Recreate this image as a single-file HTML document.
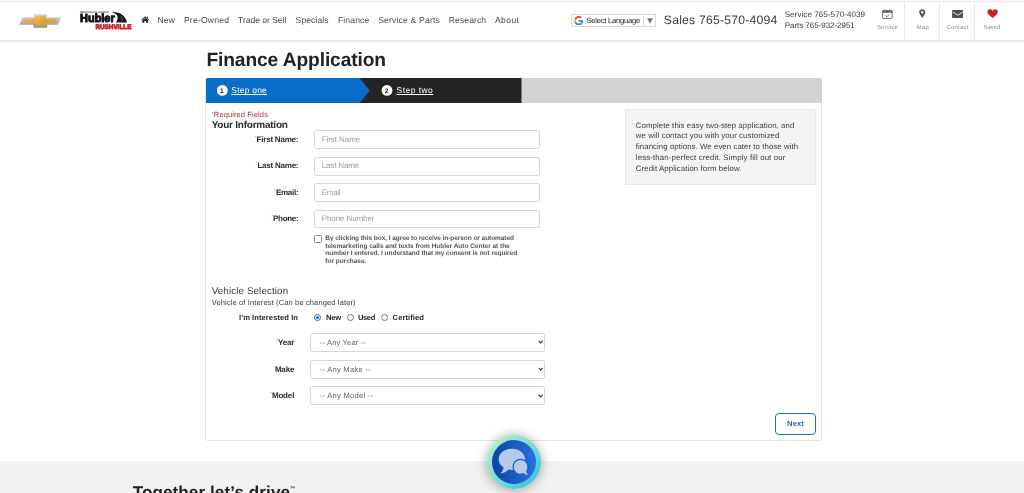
<!DOCTYPE html>
<html lang="en"><head><meta charset="utf-8"><title>Finance Application | Hubler Chevrolet Rushville</title>
<style>
*{box-sizing:border-box}
html,body{margin:0;padding:0;background:#fff}
body{font-family:"Liberation Sans",Arial,sans-serif;overflow:hidden;text-rendering:geometricPrecision}
#page{position:relative;width:1024px;height:493px;overflow:hidden;background:transparent;will-change:transform}
.t{position:absolute;white-space:nowrap;line-height:1;display:block}
.abs{position:absolute}
.ast{font-size:.6em;vertical-align:.55em;letter-spacing:0}
.ast.r{color:#9a9a9a;font-weight:400}
#hdr{position:absolute;left:0;top:0;width:1024px;height:40px;background:#fff;box-shadow:0 1px 3px rgba(0,0,0,.16)}
#topline{position:absolute;left:0;top:0;width:1024px;height:2px;background:linear-gradient(#fef9f7 0,#fef9f7 50%,#f8e9eb 50%,#f8e9eb 100%)}
.vdiv{position:absolute;top:2px;width:1px;height:38px;background:#e9e9e9}
#footer{position:absolute;left:0;top:460.8px;width:1024px;height:40px;background:#f2f2f2}
#panel{position:absolute;left:205px;top:78px;width:617px;height:363px;border:1px solid #e3e3e3;border-radius:2.5px;background:#fff}
#steps{position:absolute;left:205.5px;top:78.2px;width:616.5px;height:24.9px;background:#d3d3d3;border-radius:2.5px 2.5px 0 0;overflow:hidden}
.inp{position:absolute;left:314px;width:226px;height:19px;border:1px solid #d6d6d6;border-radius:2.3px;background:#fff}
.sel{position:absolute;left:310px;width:234.5px;height:19px;border:1px solid #d6d6d6;border-radius:2.3px;background:#fff}
.radio{position:absolute;width:7.2px;height:7.2px;border-radius:50%;border:.8px solid #767676;background:#fff}
#info{position:absolute;left:625.1px;top:109.1px;width:190.5px;height:75.6px;background:#f4f4f4;border:1px solid #e7e7e7;border-radius:1px}
#next{position:absolute;left:774.8px;top:413px;width:41.2px;height:21.6px;border:1.1px solid #1a6fc9;border-radius:4px;background:#fff}
#cb{position:absolute;left:314.2px;top:235.2px;width:7.6px;height:7.6px;border:.7px solid #8a8a8a;border-radius:1.5px;background:#fff}
#gt{position:absolute;left:571px;top:14px;width:85px;height:13px;border:1px solid #dadada;background:#fff}

</style></head><body>
<div id="page">
<div id="footer"></div>
<div id="hdr"></div>
<div id="topline"></div>
<div class="vdiv" style="left:904px"></div>
<div class="vdiv" style="left:939.2px"></div>
<div class="vdiv" style="left:974px"></div>
<div id="gt"></div>
<div id="panel"></div>
<div id="steps">
<svg class="abs" style="left:0;top:0" width="617" height="25" viewBox="0 0 617 25">
<rect x="0" y="0" width="315.5" height="25" fill="#242424"/>
<polygon points="0,0 153.5,0 163.8,12.4 153.5,25 0,25" fill="#0a6cc9"/>
<circle cx="16.3" cy="12.4" r="5.4" fill="#fff"/>
<circle cx="181" cy="12.4" r="5.4" fill="#fff"/>
</svg>
</div>
<div class="inp" style="top:130px"></div>
<div class="inp" style="top:157px"></div>
<div class="inp" style="top:183px"></div>
<div class="inp" style="top:210px;height:18px"></div>
<div id="cb"></div>
<div class="radio" style="left:314.1px;top:313.8px;border-color:#1a6fe0"></div>
<div class="abs" style="left:316px;top:315.7px;width:3.4px;height:3.4px;border-radius:50%;background:#1a6fe0"></div>
<div class="radio" style="left:346.8px;top:313.8px"></div>
<div class="radio" style="left:381.3px;top:313.8px"></div>
<div class="sel" style="top:333px"></div>
<div class="sel" style="top:360px"></div>
<div class="sel" style="top:386px"></div>
<div id="info"></div>
<div id="next"></div>
<!-- chevy bowtie -->
<svg class="abs" style="left:17.5px;top:13px" width="45" height="16" viewBox="0 0 45 16">
<defs><linearGradient id="gold" x1="0" y1="0" x2="0" y2="1"><stop offset="0" stop-color="#eec361"/><stop offset=".5" stop-color="#e3ae41"/><stop offset="1" stop-color="#dca233"/></linearGradient>
<linearGradient id="silv" x1="0" y1="0" x2="0" y2="1"><stop offset="0" stop-color="#dedede"/><stop offset=".5" stop-color="#bcbcbc"/><stop offset="1" stop-color="#8c8c8c"/></linearGradient></defs>
<polygon points="4.6,4.2 15.5,4.2 15.5,1 29.2,1 29.2,4.2 43.3,4.2 39.9,11.7 29.2,11.7 29.2,14.7 15.5,14.7 15.5,11.7 1.3,11.7" fill="url(#silv)"/>
<polygon points="7.6,5.7 16.9,5.7 16.9,2.7 27.9,2.7 27.9,5.7 38.5,5.7 36.9,10 27.9,10 27.9,13 16.9,13 16.9,10 5.7,10" fill="url(#gold)"/>
<polygon points="22.4,2.7 27.9,2.7 27.9,5.7 38.5,5.7 36.9,10 27.9,10 27.9,13 22.4,13" fill="#c98a1c" opacity=".28"/>
</svg>
<!-- Hubler logo -->
<svg class="abs" style="left:78px;top:9px" width="56" height="22" viewBox="0 0 56 22">
<text x="1.7" y="3.5" font-family="Liberation Sans, Arial, sans-serif" font-size="2.6" font-weight="700" font-style="italic" fill="#333" textLength="29" lengthAdjust="spacingAndGlyphs">INDIANA'S GIANT</text>
<text x="2.1" y="13.4" font-family="Liberation Sans, Arial, sans-serif" font-size="11.7" font-weight="700" fill="#111" stroke="#111" stroke-width="1" stroke-linejoin="round" textLength="34.6" lengthAdjust="spacingAndGlyphs">Hubler</text>
<path d="M33.9,3.1 C38,2.9 42,3.8 45,6.4 C47.2,8.3 48.4,10.6 49,13.4 L38,13.4 C40.2,10.4 40.4,7.4 38.2,5.6 C36.8,4.5 35.4,3.7 33.9,3.1 Z" fill="#161616"/>
<path d="M43.4,7.6 L44.3,12" stroke="#fff" stroke-width=".7" stroke-dasharray="1.1 .8" fill="none" opacity=".8"/>
<text x="17.4" y="20.1" font-family="Liberation Sans, Arial, sans-serif" font-size="6.6" font-weight="700" fill="#d01f2e" stroke="#d01f2e" stroke-width=".8" stroke-linejoin="round" textLength="36" lengthAdjust="spacingAndGlyphs">RUSHVILLE</text>
</svg>
<!-- home icon -->
<svg class="abs" style="left:140.5px;top:16.1px" width="8.4" height="7" viewBox="0 0 24 20">
<path d="M12 1 L0.5 10.5 L2 12.3 L12 4 L22 12.3 L23.5 10.5 L19.5 7.2 V2.2 H16.6 V4.8 Z" fill="#222"/>
<path d="M12 5.6 L3.6 12.5 V19.5 H9.6 V14 H14.4 V19.5 H20.4 V12.5 Z" fill="#222"/>
</svg>
<!-- google G -->
<svg class="abs" style="left:573.5px;top:15.6px" width="9.4" height="9.4" viewBox="0 0 48 48">
<path fill="#EA4335" d="M24 9.5c3.54 0 6.71 1.22 9.21 3.6l6.85-6.85C35.9 2.38 30.47 0 24 0 14.62 0 6.51 5.38 2.56 13.22l7.98 6.19C12.43 13.72 17.74 9.5 24 9.5z"/>
<path fill="#4285F4" d="M46.98 24.55c0-1.57-.15-3.09-.38-4.55H24v9.02h12.94c-.58 2.96-2.26 5.48-4.78 7.18l7.73 6c4.51-4.18 7.09-10.36 7.09-17.65z"/>
<path fill="#FBBC05" d="M10.53 28.59c-.48-1.45-.76-2.99-.76-4.59s.27-3.14.76-4.59l-7.98-6.19C.92 16.46 0 20.12 0 24c0 3.88.92 7.54 2.56 10.78l7.97-6.19z"/>
<path fill="#34A853" d="M24 48c6.48 0 11.93-2.13 15.89-5.81l-7.73-6c-2.15 1.45-4.92 2.3-8.16 2.3-6.26 0-11.57-4.22-13.47-9.91l-7.98 6.19C6.51 42.62 14.62 48 24 48z"/>
</svg>
<div class="abs" style="left:643.3px;top:16px;width:1px;height:9.5px;background:#d5d5d5"></div>
<svg class="abs" style="left:646.8px;top:17.6px" width="6" height="6" viewBox="0 0 6 6"><polygon points="0.2,0.3 5.8,0.3 3,5.7" fill="#767676"/></svg>
<!-- calendar -->
<svg class="abs" style="left:882.4px;top:9px" width="10.8" height="10" viewBox="0 0 21.6 20">
<rect x="1.2" y="3.2" width="19.2" height="15.6" rx="1.2" fill="none" stroke="#505050" stroke-width="1.6"/>
<rect x="1.2" y="3.2" width="19.2" height="4.2" fill="#505050"/>
<rect x="5" y="0.4" width="2.6" height="5" rx="1.2" fill="#505050" stroke="#fff" stroke-width=".7"/>
<rect x="14" y="0.4" width="2.6" height="5" rx="1.2" fill="#505050" stroke="#fff" stroke-width=".7"/>
<path d="M6.8 12.6 L9.8 15.4 L15 10.2" fill="none" stroke="#505050" stroke-width="1.6"/>
</svg>
<!-- pin -->
<svg class="abs" style="left:919.3px;top:9.4px" width="6.6" height="9.2" viewBox="0 0 13.2 18.4">
<path d="M6.6 0.3 C3 0.3 0.4 3 0.4 6.4 C0.4 10 4.4 13.6 6.6 18 C8.8 13.6 12.8 10 12.8 6.4 C12.8 3 10.2 0.3 6.6 0.3 Z M6.6 3.8 A2.6 2.6 0 1 1 6.6 9 A2.6 2.6 0 1 1 6.6 3.8 Z" fill="#505050" fill-rule="evenodd"/>
</svg>
<!-- envelope -->
<svg class="abs" style="left:951.8px;top:10.1px" width="11.6" height="8.2" viewBox="0 0 23.2 16.4">
<rect x="0.2" y="0.2" width="22.8" height="16" rx="1.4" fill="#505050"/>
<path d="M1.6 4.2 L11.6 10.4 L21.6 4.2" fill="none" stroke="#fff" stroke-width="1.7"/>
</svg>
<!-- heart -->
<svg class="abs" style="left:986.6px;top:9.3px" width="11.2" height="9.2" viewBox="0 0 24 20">
<path d="M12 19.6 C5 14 0.6 10.4 0.6 5.8 C0.6 2.6 3.2 0.4 6.2 0.4 C8.6 0.4 10.8 1.8 12 4 C13.2 1.8 15.4 0.4 17.8 0.4 C20.8 0.4 23.4 2.6 23.4 5.8 C23.4 10.4 19 14 12 19.6 Z" fill="#cb1e22"/>
</svg>
<!-- select arrows -->
<svg class="abs" style="left:537.6px;top:340.4px" width="5.4" height="4" viewBox="0 0 5.4 4"><path d="M0.7 0.9 L2.7 2.9 L4.7 0.9" fill="none" stroke="#333" stroke-width="1.1"/></svg>
<svg class="abs" style="left:537.6px;top:367.1px" width="5.4" height="4" viewBox="0 0 5.4 4"><path d="M0.7 0.9 L2.7 2.9 L4.7 0.9" fill="none" stroke="#333" stroke-width="1.1"/></svg>
<svg class="abs" style="left:537.6px;top:393.7px" width="5.4" height="4" viewBox="0 0 5.4 4"><path d="M0.7 0.9 L2.7 2.9 L4.7 0.9" fill="none" stroke="#333" stroke-width="1.1"/></svg>
<!-- chat -->
<div class="abs" id="chat" style="left:486.5px;top:434.5px;width:54.4px;height:54.4px;border-radius:50%;background:linear-gradient(135deg,#b4ecd0 10%,#6cd8d4 60%,#35c4dc 90%);box-shadow:0 1px 11px 1px rgba(0,0,0,.3)"></div>
<div class="abs" style="left:491.8px;top:439.8px;width:43.8px;height:43.8px;border-radius:50%;background:linear-gradient(90deg,#0944a4,#2a70e2)"></div>
<svg class="abs" style="left:491.8px;top:439.8px" width="43.8" height="43.8" viewBox="0 0 43.8 43.8">
<path d="M19.9 8.7 C12.6 8.7 6.7 13.4 6.7 19.3 C6.7 22.6 8.6 25.6 11.6 27.5 C11.3 29.7 10 31.9 8.4 33.4 C11.6 33.2 14.6 32 16.4 29.6 C17.5 29.8 18.7 29.9 19.9 29.9 C27.2 29.9 33.1 25.2 33.1 19.3 C33.1 13.4 27.2 8.7 19.9 8.7 Z" fill="#b5c9ed"/>
<circle cx="28.6" cy="26.9" r="8.1" fill="#1659c4"/>
<path d="M28.6 20.1 C24.8 20.1 21.8 23.1 21.8 26.9 C21.8 30.7 24.8 33.7 28.6 33.7 C29.6 33.7 30.5 33.5 31.4 33.1 C32.6 34.3 34.4 35 36 35.1 C35 34 34.4 32.7 34.2 31.2 C35 30 35.4 28.5 35.4 26.9 C35.4 23.1 32.4 20.1 28.6 20.1 Z" fill="#b5c9ed"/>
</svg>

<span class="t" id="t0" style="left:157.4px;top:16.00px;font-size:8.6px;font-weight:400;color:#4a4a4a;letter-spacing:0.148px;">New</span>
<span class="t" id="t1" style="left:183.9px;top:16.00px;font-size:8.6px;font-weight:400;color:#4a4a4a;letter-spacing:0.204px;">Pre-Owned</span>
<span class="t" id="t2" style="left:238.0px;top:16.00px;font-size:8.6px;font-weight:400;color:#4a4a4a;letter-spacing:-0.049px;">Trade or Sell</span>
<span class="t" id="t3" style="left:295.6px;top:16.00px;font-size:8.6px;font-weight:400;color:#4a4a4a;letter-spacing:0.074px;">Specials</span>
<span class="t" id="t4" style="left:338.0px;top:16.00px;font-size:8.6px;font-weight:400;color:#4a4a4a;letter-spacing:0.104px;">Finance</span>
<span class="t" id="t5" style="left:378.2px;top:16.00px;font-size:8.6px;font-weight:400;color:#4a4a4a;letter-spacing:0.169px;">Service &amp; Parts</span>
<span class="t" id="t6" style="left:448.8px;top:16.00px;font-size:8.6px;font-weight:400;color:#4a4a4a;letter-spacing:0.074px;">Research</span>
<span class="t" id="t7" style="left:495.0px;top:16.00px;font-size:8.6px;font-weight:400;color:#4a4a4a;letter-spacing:0.383px;">About</span>
<span class="t" id="t8" style="left:586.5px;top:17.00px;font-size:7.6px;font-weight:400;color:#222;letter-spacing:-0.237px;">Select Language</span>
<span class="t" id="t9" style="left:663.8px;top:14.00px;font-size:12.2px;font-weight:400;color:#3a3a3a;letter-spacing:0.225px;">Sales 765-570-4094</span>
<span class="t" id="t10" style="left:784.7px;top:11.00px;font-size:8px;font-weight:400;color:#3a3a3a;letter-spacing:0.083px;">Service 765-570-4039</span>
<span class="t" id="t11" style="left:784.7px;top:22.00px;font-size:8px;font-weight:400;color:#3a3a3a;letter-spacing:-0.036px;">Parts 765-932-2951</span>
<span class="t" id="t12" style="left:877.0px;top:26.00px;font-size:5.9px;font-weight:400;color:#8a8a8a;letter-spacing:0.191px;">Service</span>
<span class="t" id="t13" style="left:916.8px;top:26.00px;font-size:5.9px;font-weight:400;color:#8a8a8a;letter-spacing:0.216px;">Map</span>
<span class="t" id="t14" style="left:946.4px;top:26.00px;font-size:5.9px;font-weight:400;color:#8a8a8a;letter-spacing:0.265px;">Contact</span>
<span class="t" id="t15" style="left:983.6px;top:26.00px;font-size:5.9px;font-weight:400;color:#8a8a8a;letter-spacing:-0.026px;">Saved</span>
<span class="t" id="t16" style="left:206.4px;top:51.00px;font-size:19.2px;font-weight:700;color:#222;letter-spacing:-0.105px;">Finance Application</span>
<span class="t" id="t17" style="left:231.3px;top:86.00px;font-size:8.5px;font-weight:400;color:#fff;letter-spacing:0.210px;text-decoration:underline;text-underline-offset:.9px;text-decoration-thickness:.7px;text-decoration-skip-ink:none;">Step one</span>
<span class="t" id="t18" style="left:396.6px;top:86.00px;font-size:8.5px;font-weight:400;color:#fff;letter-spacing:0.446px;text-decoration:underline;text-underline-offset:.9px;text-decoration-thickness:.7px;text-decoration-skip-ink:none;">Step two</span>
<span class="t" id="t19" style="left:220.0px;top:89.00px;font-size:6.6px;font-weight:700;color:#222;letter-spacing:0.000px;">1</span>
<span class="t" id="t20" style="left:384.7px;top:89.00px;font-size:6.6px;font-weight:700;color:#222;letter-spacing:0.000px;">2</span>
<span class="t" id="t21" style="left:212.1px;top:111.00px;font-size:7.5px;font-weight:400;color:#a5303f;letter-spacing:0.107px;"><span class="ast">*</span>Required Fields</span>
<span class="t" id="t22" style="left:211.7px;top:121.00px;font-size:10px;font-weight:700;color:#2a2a2a;letter-spacing:-0.241px;">Your Information</span>
<span class="t" id="t23" style="left:254.7px;top:136.00px;font-size:8px;font-weight:700;color:#2a2a2a;letter-spacing:-0.208px;"><span class="ast r">*</span>First Name:</span>
<span class="t" id="t24" style="left:255.5px;top:162.00px;font-size:8px;font-weight:700;color:#2a2a2a;letter-spacing:-0.220px;"><span class="ast r">*</span>Last Name:</span>
<span class="t" id="t25" style="left:274.1px;top:189.00px;font-size:8px;font-weight:700;color:#2a2a2a;letter-spacing:-0.282px;"><span class="ast r">*</span>Email:</span>
<span class="t" id="t26" style="left:271.2px;top:215.00px;font-size:8px;font-weight:700;color:#2a2a2a;letter-spacing:-0.314px;"><span class="ast r">*</span>Phone:</span>
<span class="t" id="t27" style="left:321.7px;top:136.00px;font-size:8px;font-weight:400;color:#9a9a9a;letter-spacing:-0.069px;">First Name</span>
<span class="t" id="t28" style="left:321.7px;top:162.00px;font-size:8px;font-weight:400;color:#9a9a9a;letter-spacing:-0.148px;">Last Name</span>
<span class="t" id="t29" style="left:321.7px;top:189.00px;font-size:8px;font-weight:400;color:#9a9a9a;letter-spacing:-0.279px;">Email</span>
<span class="t" id="t30" style="left:321.7px;top:215.00px;font-size:8px;font-weight:400;color:#9a9a9a;letter-spacing:-0.092px;">Phone Number</span>
<span class="t" id="t31" style="left:325.3px;top:236.00px;font-size:6.5px;font-weight:700;color:#555;letter-spacing:-0.056px;">By clicking this box, I agree to receive in-person or automated</span>
<span class="t" id="t32" style="left:325.3px;top:244.00px;font-size:6.5px;font-weight:700;color:#555;letter-spacing:-0.017px;">telemarketing calls and texts from Hubler Auto Center at the</span>
<span class="t" id="t33" style="left:325.3px;top:251.00px;font-size:6.5px;font-weight:700;color:#555;letter-spacing:-0.034px;">number I entered. I understand that my consent is not required</span>
<span class="t" id="t34" style="left:325.3px;top:259.00px;font-size:6.5px;font-weight:700;color:#555;letter-spacing:-0.016px;">for purchase.</span>
<span class="t" id="t35" style="left:211.7px;top:287.00px;font-size:9.8px;font-weight:400;color:#3a3a3a;letter-spacing:0.111px;">Vehicle Selection</span>
<span class="t" id="t36" style="left:211.7px;top:299.00px;font-size:7.5px;font-weight:400;color:#3a3a3a;letter-spacing:0.134px;">Vehicle of Interest (Can be changed later)</span>
<span class="t" id="t37" style="left:239.1px;top:314.00px;font-size:7.6px;font-weight:700;color:#2a2a2a;letter-spacing:0.060px;">I&#x27;m Interested In</span>
<span class="t" id="t38" style="left:325.9px;top:314.00px;font-size:7.6px;font-weight:700;color:#2a2a2a;letter-spacing:-0.212px;">New</span>
<span class="t" id="t39" style="left:358.0px;top:314.00px;font-size:7.6px;font-weight:700;color:#2a2a2a;letter-spacing:-0.426px;">Used</span>
<span class="t" id="t40" style="left:392.6px;top:314.00px;font-size:7.6px;font-weight:700;color:#2a2a2a;letter-spacing:0.073px;">Certified</span>
<span class="t" id="t41" style="left:276.2px;top:339.00px;font-size:8px;font-weight:700;color:#2a2a2a;letter-spacing:-0.195px;"><span class="ast r">*</span>Year</span>
<span class="t" id="t42" style="left:273.0px;top:366.00px;font-size:8px;font-weight:700;color:#2a2a2a;letter-spacing:-0.173px;"><span class="ast r">*</span>Make</span>
<span class="t" id="t43" style="left:270.0px;top:392.00px;font-size:8px;font-weight:700;color:#2a2a2a;letter-spacing:-0.157px;"><span class="ast r">*</span>Model</span>
<span class="t" id="t44" style="left:319.8px;top:339.00px;font-size:7.6px;font-weight:400;color:#606060;letter-spacing:0.136px;">-- Any Year --</span>
<span class="t" id="t45" style="left:319.8px;top:366.00px;font-size:7.6px;font-weight:400;color:#606060;letter-spacing:0.232px;">-- Any Make --</span>
<span class="t" id="t46" style="left:319.8px;top:392.00px;font-size:7.6px;font-weight:400;color:#606060;letter-spacing:0.243px;">-- Any Model --</span>
<span class="t" id="t47" style="left:787.0px;top:420.00px;font-size:7.6px;font-weight:700;color:#1a6fc9;letter-spacing:0.144px;">Next</span>
<span class="t" id="t48" style="left:635.8px;top:122.00px;font-size:7.8px;font-weight:400;color:#3a3a3a;letter-spacing:0.088px;">Complete this easy two-step application, and</span>
<span class="t" id="t49" style="left:635.8px;top:132.00px;font-size:7.8px;font-weight:400;color:#3a3a3a;letter-spacing:0.093px;">we will contact you with your customized</span>
<span class="t" id="t50" style="left:635.8px;top:143.00px;font-size:7.8px;font-weight:400;color:#3a3a3a;letter-spacing:0.073px;">financing options. We even cater to those with</span>
<span class="t" id="t51" style="left:635.8px;top:154.00px;font-size:7.8px;font-weight:400;color:#3a3a3a;letter-spacing:0.148px;">less-than-perfect credit. Simply fill out our</span>
<span class="t" id="t52" style="left:635.8px;top:165.00px;font-size:7.8px;font-weight:400;color:#3a3a3a;letter-spacing:0.099px;">Credit Application form below.</span>
<span class="t" id="t53" style="left:132.7px;top:484.00px;font-size:17.1px;font-weight:700;color:#222;letter-spacing:0.080px;">Together let’s drive</span>
<span class="t" id="t54" style="left:290.3px;top:487.00px;font-size:5px;font-weight:700;color:#222;letter-spacing:0.000px;">™</span>
</div>
</body></html>
